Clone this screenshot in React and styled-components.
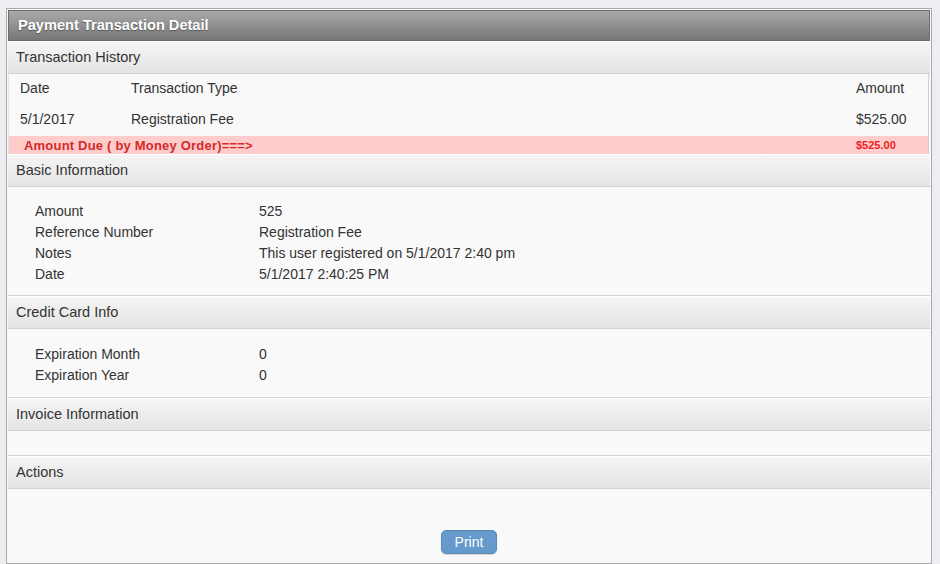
import React from 'react';
import styled, { createGlobalStyle } from 'styled-components';

const GlobalStyle = createGlobalStyle`
  body {
    margin: 0;
    background: #eceef1;
    font-family: "Liberation Sans", Arial, sans-serif;
    color: #333;
  }
`;

const Page = styled.div`
  padding: 8px 8px 0 6px;
  height: 564px;
  box-sizing: border-box;
  overflow: hidden;
`;

const Panel = styled.div`
  border: 1px solid #a9a9a9;
  background: #f9f9f9;
  padding: 1px 1px 0 1px;
  height: 100%;
  box-sizing: border-box;
`;

const TitleBar = styled.div`
  height: 31px;
  box-sizing: border-box;
  border: 1px solid #6d6d6d;
  background: linear-gradient(to bottom, #aaaaaa, #767676);
  color: #fff;
  font-weight: bold;
  font-size: 14.6px;
  line-height: 29px;
  padding-left: 9px;
  text-shadow: 0 1px 1px #555;
`;

const SectionHeader = styled.div`
  height: 33px;
  box-sizing: border-box;
  border-top: 1px solid #fff;
  border-bottom: 1px solid #d2d2d2;
  background: linear-gradient(to bottom, #f5f5f5, #e4e4e4);
  font-size: 14.5px;
  line-height: 31px;
  padding-left: 8px;
  color: #333;
`;

const Table = styled.div`
  margin-right: 1px;
  border-right: 1px solid #d2d2d2;
  border-left: 1px solid #e4e4e4;
  font-size: 14px;
`;

const TableRow = styled.div`
  display: grid;
  grid-template-columns: 111px 1fr 72px;
  height: ${(p) => p.h}px;
  align-items: center;
  padding-left: 11px;
  background: ${(p) => (p.due ? '#ffcccc' : 'transparent')};
  color: ${(p) => (p.due ? '#d42a2a' : '#333')};
  font-weight: ${(p) => (p.due ? 'bold' : 'normal')};
`;

const DueLabel = styled.span`
  grid-column: 1 / 3;
  padding-left: 4px;
  font-size: 13px;
  letter-spacing: 0.2px;
`;

const DueAmount = styled.span`
  font-size: 11px;
  color: #ee1c1c;
`;

const InfoBody = styled.div`
  display: grid;
  grid-template-columns: 224px 1fr;
  grid-auto-rows: 21px;
  align-items: center;
  padding: ${(p) => p.pad};
  padding-left: 27px;
  font-size: 14px;
  border-bottom: 1px solid #d2d2d2;
`;

const EmptyBody = styled.div`
  height: 24px;
  border-bottom: 1px solid #d2d2d2;
`;

const Actions = styled.div`
  display: flex;
  justify-content: center;
  padding-top: 41px;
`;

const Button = styled.button`
  font-family: "Liberation Sans", Arial, sans-serif;
  font-size: 14px;
  color: #fff;
  background: #6699cc;
  border: 1px solid #5a89b8;
  border-radius: 5px;
  height: 24px;
  padding: 0 13px;
  box-shadow: 0 1px 1px rgba(0, 0, 0, 0.15);
`;

const basicInfo = [
  ['Amount', '525'],
  ['Reference Number', 'Registration Fee'],
  ['Notes', 'This user registered on 5/1/2017 2:40 pm'],
  ['Date', '5/1/2017 2:40:25 PM'],
];

const cardInfo = [
  ['Expiration Month', '0'],
  ['Expiration Year', '0'],
];

function InfoRows({ rows }) {
  return rows.map(([label, value]) => (
    <React.Fragment key={label}>
      <span>{label}</span>
      <span>{value}</span>
    </React.Fragment>
  ));
}

export default function App() {
  return (
    <>
      <GlobalStyle />
      <Page>
        <Panel>
          <TitleBar>Payment Transaction Detail</TitleBar>
          <SectionHeader>Transaction History</SectionHeader>
          <Table>
            <TableRow h={28}>
              <span>Date</span>
              <span>Transaction Type</span>
              <span>Amount</span>
            </TableRow>
            <TableRow h={34}>
              <span>5/1/2017</span>
              <span>Registration Fee</span>
              <span>$525.00</span>
            </TableRow>
            <TableRow h={18} due>
              <DueLabel>Amount Due ( by Money Order)===&gt;</DueLabel>
              <DueAmount>$525.00</DueAmount>
            </TableRow>
          </Table>
          <SectionHeader>Basic Information</SectionHeader>
          <InfoBody pad="13px 0 11px">
            <InfoRows rows={basicInfo} />
          </InfoBody>
          <SectionHeader>Credit Card Info</SectionHeader>
          <InfoBody pad="14px 0 12px">
            <InfoRows rows={cardInfo} />
          </InfoBody>
          <SectionHeader>Invoice Information</SectionHeader>
          <EmptyBody />
          <SectionHeader>Actions</SectionHeader>
          <Actions>
            <Button type="button">Print</Button>
          </Actions>
        </Panel>
      </Page>
    </>
  );
}
